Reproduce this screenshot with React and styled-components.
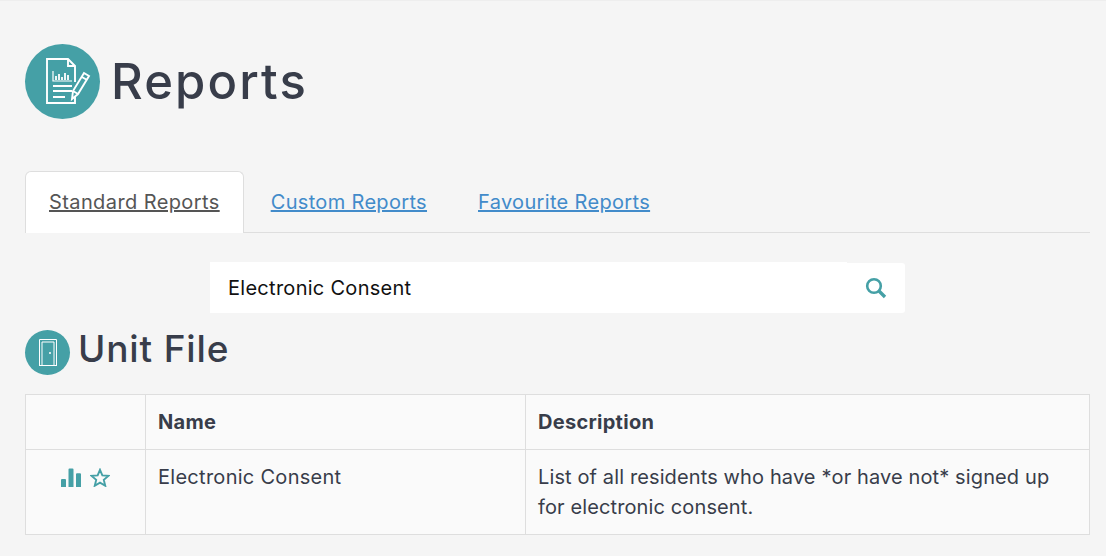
import { createGlobalStyle, styled } from 'styled-components';

const GlobalStyle = createGlobalStyle`
  html, body {
    margin: 0;
    padding: 0;
    background: #f5f5f5;
    font-family: Inter, 'Liberation Sans', sans-serif;
    color: #383d4a;
  }
`;

const ReportIcon = () => (
  <svg width='75' height='75' viewBox='0 0 75 75' fill='none' stroke='#fff' strokeWidth='1.9'>
    <path d='M50 38V22l-7-7H22v44h28v-7' />
    <path d='M43 15v7h7' />
    <path d='M28 27v10h19' strokeWidth='1.2' />
    <path d='M31 36v-4M34 36v-6M37 36v-3M40 36v-7M43 36v-5' strokeWidth='1.8' />
    <path d='M28 42h19M28 47h19M28 53h12' />
    <path d='M47 55l1-8 11-18 5 3-11 18zM57 33l5 3M48 47l5 3' />
  </svg>
);

const DoorIcon = () => (
  <svg width='18' height='27' viewBox='0 0 18 27' fill='none' stroke='#fff' strokeWidth='1'>
    <path d='M.5 27V.5h17V27M3 27V3h12v24M0 26.500h18' />
    <path d='M10 14h2' strokeWidth='1.6' />
  </svg>
);

const SearchIcon = () => (
  <svg width='22' height='22' viewBox='0 0 22 22' fill='none' stroke='#45a0a6'>
    <circle cx='9' cy='9' r='6.8' strokeWidth='2.6' />
    <path d='M14 14l6 6' strokeWidth='3.4' />
  </svg>
);

const BarsIcon = () => (
  <svg width='20' height='19' viewBox='0 0 20 20' fill='#45a0a6' preserveAspectRatio='none'>
    <path d='M0 12.500a1 1 0 0 1 1-1h3a1 1 0 0 1 1 1V20H0zM7.500 1.500a1 1 0 0 1 1-1h3a1 1 0 0 1 1 1V20h-5zM15 6.500a1 1 0 0 1 1-1h3a1 1 0 0 1 1 1V20h-5z' />
  </svg>
);

const StarIcon = () => (
  <svg width='20' height='19' viewBox='0 0 22 21' fill='none' stroke='#45a0a6' strokeWidth='2.1'>
    <path d='M11 2l2.600 6.200 6.700.5-5.100 4.400 1.600 6.500L11 16.100l-5.800 3.500 1.600-6.500L1.700 8.700l6.700-.5z' />
  </svg>
);

export default function App() {
  return (
    <Page>
      <GlobalStyle />
      <Header>
        <Badge $size={75}>
          <ReportIcon />
        </Badge>
        <Title>Reports</Title>
      </Header>

      <Tabs>
        <Tab $active>
          <TabLink $active>Standard Reports</TabLink>
        </Tab>
        <Tab>
          <TabLink>Custom Reports</TabLink>
        </Tab>
        <Tab>
          <TabLink>Favourite Reports</TabLink>
        </Tab>
      </Tabs>

      <SearchBar>
        <SearchInput readOnly value='Electronic Consent' />
        <SearchButton>
          <SearchIcon />
        </SearchButton>
      </SearchBar>

      <Section>
        <Badge $size={45}>
          <DoorIcon />
        </Badge>
        <SectionTitle>Unit File</SectionTitle>
      </Section>

      <Table>
        <colgroup>
          <col width='120' />
          <col width='380' />
          <col />
        </colgroup>
        <thead>
          <tr>
            <Th />
            <Th>Name</Th>
            <Th>Description</Th>
          </tr>
        </thead>
        <tbody>
          <tr>
            <Td>
              <Actions>
                <BarsIcon />
                <StarIcon />
              </Actions>
            </Td>
            <Td>Electronic Consent</Td>
            <DescriptionCell>List of all residents who have *or have not* signed up for electronic consent.</DescriptionCell>
          </tr>
        </tbody>
      </Table>
    </Page>
  );
}

const Page = styled.div`
  box-sizing: border-box;
  height: 556px;
  padding: 44px 16px 0 25px;
  border-top: 1px solid #eeeeee;
  overflow: hidden;
`;

const Header = styled.header`
  display: flex;
  align-items: center;
  gap: 11px;
  margin-top: -1px;
`;

const Badge = styled.div`
  display: flex;
  align-items: center;
  justify-content: center;
  flex: none;
  width: ${(p) => p.$size}px;
  height: ${(p) => p.$size}px;
  border-radius: 50%;
  background: #45a0a6;
`;

const Title = styled.h1`
  margin: 0;
  font-size: 49px;
  font-weight: 500;
  line-height: 75px;
  letter-spacing: 2.1px;
`;

const Tabs = styled.nav`
  display: flex;
  gap: 3px;
  height: 61px;
  margin-top: 52px;
  border-bottom: 1px solid #dedede;
`;

const Tab = styled.div`
  box-sizing: border-box;
  height: 62px;
  padding: 16px 23px 0;
  border: 1px solid ${(p) => (p.$active ? '#dedede' : 'transparent')};
  border-bottom: none;
  border-radius: 6px 6px 0 0;
  background: ${(p) => (p.$active ? '#fff' : 'transparent')};
`;

const TabLink = styled.a`
  font-size: 20px;
  line-height: 28px;
  letter-spacing: ${(p) => (p.$active ? '0.4px' : '0.33px')};
  text-decoration: underline;
  color: ${(p) => (p.$active ? '#555555' : '#428bca')};
`;

const SearchBar = styled.div`
  display: flex;
  width: 695px;
  height: 50px;
  margin: 30px 0 0 185px;
  border-radius: 3px;
  background: #fff;
`;

const SearchInput = styled.input`
  flex: 1;
  min-width: 0;
  height: 51px;
  margin-top: -1px;
  padding: 0 18px;
  border: none;
  outline: none;
  background: #fff;
  font: 400 20px Inter, 'Liberation Sans', sans-serif;
  letter-spacing: 0.28px;
  color: #111;
`;

const SearchButton = styled.div`
  display: flex;
  align-items: center;
  justify-content: center;
  width: 58px;
`;

const Section = styled.section`
  display: flex;
  align-items: flex-start;
  gap: 8px;
  margin-top: 17px;
`;

const SectionTitle = styled.h2`
  margin: -4px 0 0;
  font-size: 37px;
  font-weight: 500;
  line-height: 45px;
  letter-spacing: 0.85px;
`;

const Table = styled.table`
  width: 1065px;
  margin-top: 19px;
  border-collapse: collapse;
  table-layout: fixed;
  background: #fafafa;
`;

const Th = styled.th`
  box-sizing: border-box;
  height: 55px;
  padding: 0 12px;
  border: 1px solid #dedede;
  font-size: 20px;
  font-weight: 700;
  letter-spacing: 0.28px;
  text-align: left;
`;

const Td = styled.td`
  height: 85px;
  padding: 12px;
  border: 1px solid #dedede;
  box-sizing: border-box;
  font-size: 20px;
  line-height: 30px;
  letter-spacing: 0.28px;
  vertical-align: top;
`;

const DescriptionCell = styled(Td)`
  letter-spacing: 0.12px;
`;

const Actions = styled.div`
  display: flex;
  justify-content: center;
  align-items: center;
  gap: 9px;
  height: 30px;
`;
